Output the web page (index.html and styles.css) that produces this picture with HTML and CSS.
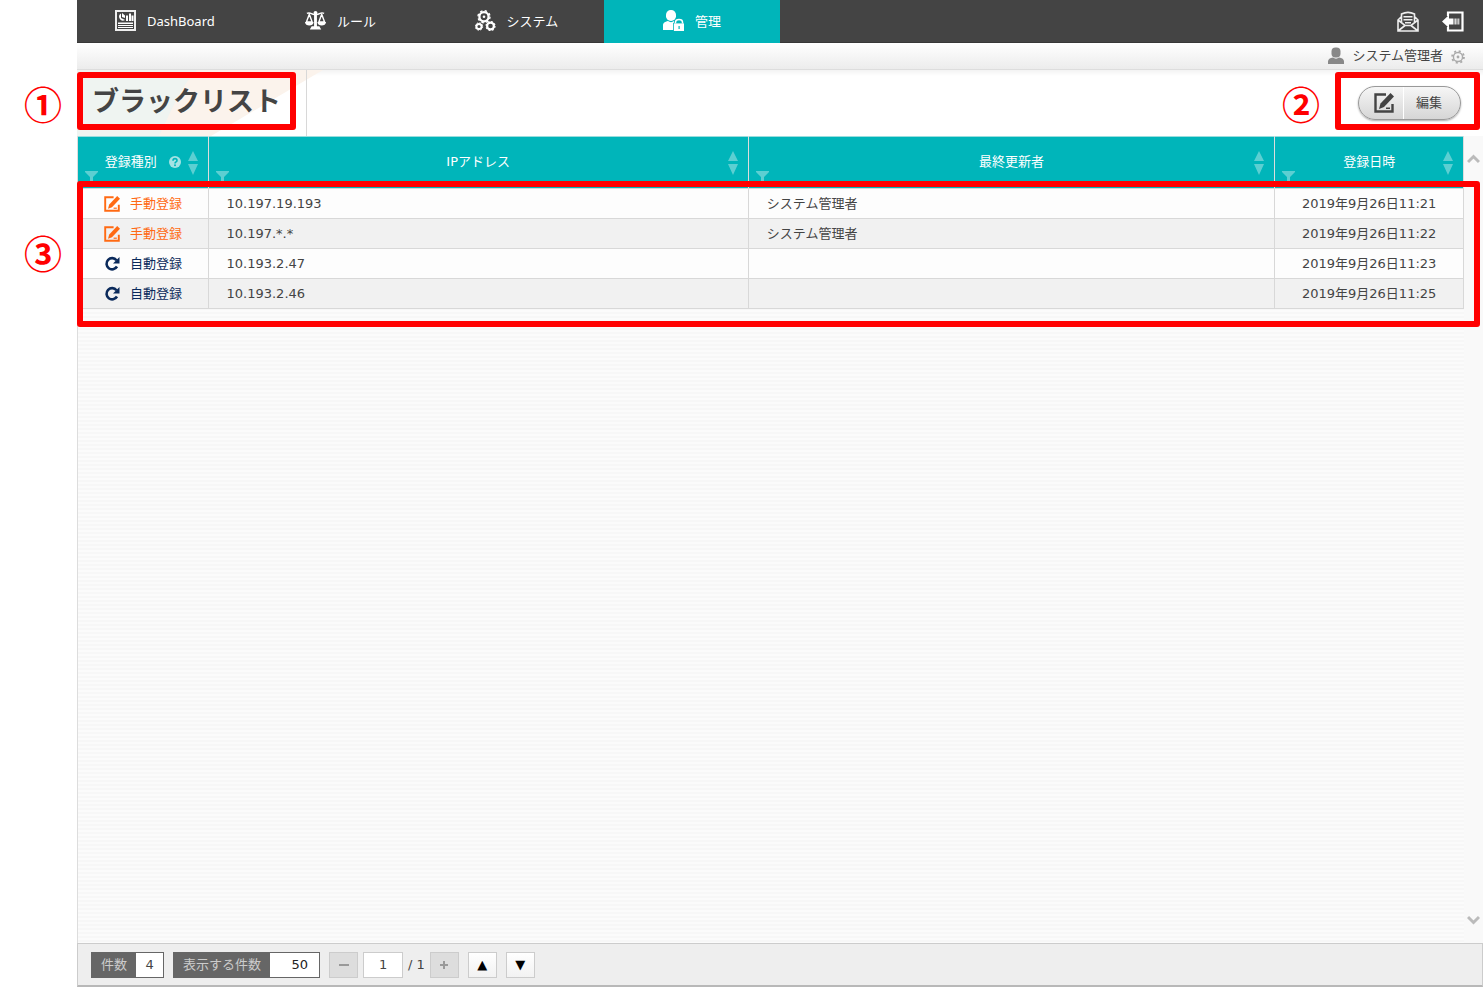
FILE: index.html
```html
<!DOCTYPE html>
<html lang="ja">
<head>
<meta charset="utf-8">
<meta name="viewport" content="width=device-width, initial-scale=1">
<title>ブラックリスト</title>
<link rel="stylesheet" href="styles.css">
</head>
<body>
<svg class="sprite" aria-hidden="true">
  <symbol id="filter" viewBox="0 0 13 13"><path fill="currentColor" d="M0 0h13v1L8 6v7H5V6L0 1z"/></symbol>
  <symbol id="sort" viewBox="0 0 10 24"><path fill="currentColor" d="M5 0l5 10H0zM0 13h10L5 24z"/></symbol>
  <symbol id="edit" viewBox="0 0 20 20"><path fill="none" stroke="currentColor" stroke-width="2.400" d="M12 1.500H1.500v17H18.500V11"/><path fill="currentColor" d="M16.500 0L20 3.500 10 14l-5 2 1.500-5.500z"/><path fill="currentColor" d="M12 14.500h4V16h-4z"/></symbol>
  <symbol id="redo" viewBox="0 0 16 16"><path fill="none" stroke="currentColor" stroke-width="2.600" d="M12.500 4.200A5.600 5.600 0 1 0 13 10.500"/><path fill="currentColor" d="M15.500 1v6.500H9z"/></symbol>
  <symbol id="person" viewBox="0 0 16 18"><rect x="3.500" y="0.500" width="9" height="10" rx="4" fill="currentColor"/><path fill="currentColor" d="M0 17v-2.500C0 12 2 11 5 10.500c1.500 1.500 4.500 1.500 6 0 3 .5 5 1.500 5 4V17z"/></symbol>
  <symbol id="gear" viewBox="0 0 20 20"><circle cx="10" cy="10" r="6.500" fill="none" stroke="currentColor" stroke-width="2"/><circle cx="10" cy="10" r="8.500" fill="none" stroke="currentColor" stroke-width="2.600" stroke-dasharray="3 3.676"/><circle cx="10" cy="10" r="2" fill="currentColor"/></symbol>
</svg>
<div class="page">
  <div class="app">
    <header class="topbar">
      <nav class="nav">
        <a class="nav-item" href="#dashboard">
          <svg class="nav-icon" viewBox="0 0 21 21"><rect x="1" y="1" width="19" height="19" fill="none" stroke="#eee" stroke-width="2"/><path fill="#fff" d="M6 3.500a3.800 3.800 0 1 0 4 6.500L6 8zM7 3v4l3 1V5.500zM11 5.500h2V11h-2zM14 3.500h2V11h-2zM16.500 5.500h2V11h-2zM3 12.500h15V14H3zM3 15h15v1H3zM3 17h15v1H3z"/></svg>
          <span>DashBoard</span>
        </a>
        <a class="nav-item" href="#rules">
          <svg class="nav-icon" viewBox="0 0 22 21"><path fill="none" stroke="#fff" stroke-width="1.500" d="M2 3c4-2 5 2 9 1 4 1 5-3 9-1M4.500 4L1.500 12h6zM17.500 4l-3 8h6z"/><circle cx="11" cy="2.500" r="2" fill="#fff"/><path fill="#fff" d="M9.500 4h3v13h-3zM0 12h9c0 5-9 5-9 0zM13 12h9c0 5-9 5-9 0zM7 16.500h8l2 3.500H5z"/></svg>
          <span>ルール</span>
        </a>
        <a class="nav-item" href="#system">
          <svg class="nav-icon" viewBox="0 0 21 21"><g fill="none" stroke="#fff"><circle cx="9" cy="6.700" r="4.600" stroke-width="2.300"/><circle cx="9" cy="6.700" r="6" stroke-width="1.400" stroke-dasharray="2.400 2.312"/><circle cx="4" cy="16.500" r="2.600" stroke-width="2"/><circle cx="4" cy="16.500" r="3.700" stroke-width="1" stroke-dasharray="1.500 1.406"/><circle cx="15.500" cy="16" r="3.400" stroke-width="2.200"/><circle cx="15.500" cy="16" r="4.500" stroke-width="1.200" stroke-dasharray="1.800 1.734"/></g><circle cx="9" cy="6.700" r="1.300" fill="#fff"/></svg>
          <span>システム</span>
        </a>
        <a class="nav-item nav-item-active" href="#admin" aria-current="page">
          <svg class="nav-icon" viewBox="0 0 21 21"><rect x="3" y="0" width="10" height="11" rx="4.800" fill="#fff"/><path fill="#fff" d="M0 20v-4.500C0 12.500 2 12 5 11c2 1.500 4 1.500 6 0v9z"/><path fill="#fff" stroke="#00b5ba" stroke-width=".8" d="M10.500 13h11v8.500h-11z"/><path fill="none" stroke="#fff" stroke-width="1.500" d="M12.500 13.500V12c0-3.500 7-3.500 7 0v1.500"/><path fill="#00b5ba" d="M15.500 16h1.200v3h-1.200z"/></svg>
          <span>管理</span>
        </a>
      </nav>
      <div class="top-actions">
        <button class="icon-button" type="button" aria-label="メール"><svg class="top-icon" viewBox="0 0 22 21"><g fill="none" stroke="#eee" stroke-width="1.600"><path d="M4 6L1 9v11h20V9l-3-3M1 9l7 5.500h6L21 9M1 20l7-5.500M21 20l-7-5.500M4.500 11V3c4-2 9-2 13 0v8"/></g><path fill="#eee" d="M6.500 5h9v1.500h-9zM6.500 8h9v1.500h-9zM8 11h6v1.500H8z"/></svg></button>
        <button class="icon-button" type="button" aria-label="ログアウト"><svg class="top-icon" viewBox="0 0 22 21"><path fill="none" stroke="#fff" stroke-width="2.200" d="M6 5V1.500h14.500v18H6V16"/><path fill="#fff" d="M7 4v3.500h4.500v6H7V17L0 10.500zM12.500 7.500h1.300v6h-1.300zM14.500 7.500h1v6h-1zM16.300 7.500h1v6h-1z"/></svg></button>
      </div>
    </header>
    <div class="userbar">
      <svg class="user-icon"><use href="#person"/></svg>
      <span>システム管理者</span>
      <button class="icon-button user-settings" type="button" aria-label="設定"><svg class="gear-icon"><use href="#gear"/></svg></button>
    </div>
    <main class="main">
      <div class="title-row">
        <svg class="title-art" viewBox="0 0 246 66" aria-hidden="true"><path fill="#fbf3ec" d="M0 0h246L134 66H0z"/><path fill="#eff4f1" d="M0 0h120C103 17 94 42 82 66H0z"/></svg>
        <h1 class="title">ブラックリスト</h1>
        <button class="edit-button" type="button"><svg class="edit-symbol"><use href="#edit"/></svg><span class="edit-label">編集</span></button>
        <div class="frame frame-title"><span class="mark">①</span></div>
        <div class="frame frame-edit"><span class="mark">②</span></div>
      </div>
      <div class="list">
        <div class="list-body">
          <table class="table">
            <colgroup><col class="col-type"><col class="col-ip"><col class="col-user"><col class="col-date"></colgroup>
            <thead>
              <tr>
                <th scope="col"><div class="head"><button class="icon-button head-filter" type="button" aria-label="登録種別で絞り込み"><svg class="filter-icon"><use href="#filter"/></svg></button><span class="head-text">登録種別<svg class="help-icon" viewBox="0 0 12 12"><circle cx="6" cy="6" r="6" fill="#a5e3e4"/><path fill="none" stroke="#00b5ba" stroke-width="1.600" d="M4 4.800c0-3 4-2.600 4-.4C8 6 6 5.800 6 7.500"/><circle cx="6" cy="9.300" r="1" fill="#00b5ba"/></svg></span><button class="icon-button head-sort" type="button" aria-label="登録種別で並べ替え"><svg class="sort-icon"><use href="#sort"/></svg></button></div></th>
                <th scope="col"><div class="head"><button class="icon-button head-filter" type="button" aria-label="IPアドレスで絞り込み"><svg class="filter-icon"><use href="#filter"/></svg></button><span class="head-text">IPアドレス</span><button class="icon-button head-sort" type="button" aria-label="IPアドレスで並べ替え"><svg class="sort-icon"><use href="#sort"/></svg></button></div></th>
                <th scope="col"><div class="head"><button class="icon-button head-filter" type="button" aria-label="最終更新者で絞り込み"><svg class="filter-icon"><use href="#filter"/></svg></button><span class="head-text">最終更新者</span><button class="icon-button head-sort" type="button" aria-label="最終更新者で並べ替え"><svg class="sort-icon"><use href="#sort"/></svg></button></div></th>
                <th scope="col"><div class="head"><button class="icon-button head-filter" type="button" aria-label="登録日時で絞り込み"><svg class="filter-icon"><use href="#filter"/></svg></button><span class="head-text">登録日時</span><button class="icon-button head-sort" type="button" aria-label="登録日時で並べ替え"><svg class="sort-icon"><use href="#sort"/></svg></button></div></th>
              </tr>
            </thead>
            <tbody>
              <tr><td><span class="type type-manual"><svg class="type-icon"><use href="#edit"/></svg>手動登録</span></td><td>10.197.19.193</td><td>システム管理者</td><td class="date">2019年9月26日11:21</td></tr>
              <tr><td><span class="type type-manual"><svg class="type-icon"><use href="#edit"/></svg>手動登録</span></td><td>10.197.*.*</td><td>システム管理者</td><td class="date">2019年9月26日11:22</td></tr>
              <tr><td><span class="type type-auto"><svg class="type-icon"><use href="#redo"/></svg>自動登録</span></td><td>10.193.2.47</td><td></td><td class="date">2019年9月26日11:23</td></tr>
              <tr><td><span class="type type-auto"><svg class="type-icon"><use href="#redo"/></svg>自動登録</span></td><td>10.193.2.46</td><td></td><td class="date">2019年9月26日11:25</td></tr>
            </tbody>
          </table>
        </div>
        <div class="scroller">
          <button class="icon-button" type="button" aria-label="上へスクロール"><svg class="chevron" viewBox="0 0 13 10"><path d="M1 8l5.500-5.500L12 8"/></svg></button>
          <button class="icon-button" type="button" aria-label="下へスクロール"><svg class="chevron" viewBox="0 0 13 10"><path d="M1 2l5.500 5.500L12 2"/></svg></button>
        </div>
        <div class="frame frame-rows"><span class="mark">③</span></div>
      </div>
    </main>
    <footer class="pager">
      <div class="count"><span class="count-label">件数</span><output class="count-value">4</output></div>
      <div class="count"><label class="count-label" for="page-size">表示する件数</label><input class="size-input" id="page-size" type="text" value="50"></div>
      <div class="pages">
        <button class="step" type="button" disabled aria-label="前のページ"><svg class="step-icon" viewBox="0 0 10 10"><path fill="#999" d="M0 4h10v2H0z"/></svg></button>
        <input class="page-input" type="text" value="1" aria-label="ページ">
        <span>/ 1</span>
        <button class="step" type="button" disabled aria-label="次のページ"><svg class="step-icon" viewBox="0 0 10 10"><path fill="#999" d="M1 4h3V1h2v3h3v2H6v3H4V6H1z"/></svg></button>
      </div>
      <button class="step step-move" type="button">▲</button>
      <button class="step step-move" type="button">▼</button>
    </footer>
  </div>
</div>
</body>
</html>
```
FILE: styles.css
```css
* { box-sizing: border-box; }
body {
  margin: 0;
  background: #fff;
  color: #444;
  font: 13px/20px "DejaVu Sans", "Noto Sans CJK JP", sans-serif;
}
button, input { font: inherit; color: inherit; }
svg { display: block; flex: none; }
.sprite { position: absolute; width: 0; height: 0; }
.icon-button { display: block; padding: 0; border: 0; background: none; color: inherit; cursor: pointer; }

.page { min-height: 100vh; display: flex; padding: 0 0 7px 77px; }
.app { flex: 1; min-width: 0; display: flex; flex-direction: column; }

.topbar { display: flex; justify-content: space-between; height: 43px; background: #444; border-bottom: 1px solid #383838; }
.nav { display: flex; flex: 1; margin-right: -86px; }
.nav-item {
  flex: 0 0 12.5%;
  height: 43px;
  padding-bottom: 2px;
  display: flex;
  align-items: center;
  justify-content: center;
  gap: 11px;
  color: #fff;
  font-family: "Noto Sans", "Noto Sans CJK JP", sans-serif;
  text-decoration: none;
  white-space: nowrap;
}
.nav-item-active { background: #00b5ba; }
.nav-icon { width: 21px; height: 21px; }
.top-actions { display: flex; align-items: center; gap: 23px; padding-right: 19px; }
.top-icon { width: 22px; height: 21px; }

.userbar {
  display: flex;
  align-items: center;
  justify-content: flex-end;
  gap: 8px;
  height: 27px;
  padding-right: 18px;
  background: linear-gradient(#fff, #ececec);
  border-bottom: 1px solid #ddd;
}
.user-icon { width: 16px; height: 18px; color: #888; }
.gear-icon { width: 14px; height: 14px; color: #aaa; }
.user-settings { padding-top: 2px; }

.main { flex: 1; display: flex; flex-direction: column; }
.title-row {
  position: relative;
  display: flex;
  align-items: center;
  justify-content: space-between;
  height: 66px;
  padding-right: 22px;
  background: linear-gradient(#f3f3f3, #fff 6px);
}
.title-art { position: absolute; top: 0; left: 0; width: 246px; height: 66px; }
.title {
  position: relative;
  width: 230px;
  height: 66px;
  margin: 0;
  padding-left: 15px;
  border-right: 1px solid #d8d8d8;
  font: bold 27px/60px "Noto Sans CJK JP", sans-serif;
  white-space: nowrap;
}
.edit-button {
  display: flex;
  align-items: center;
  height: 34px;
  padding: 0;
  border: 1px solid #999;
  border-radius: 17px;
  background: linear-gradient(#f6f6f6, #d6d6d6);
  box-shadow: 0 1px 2px #aaa;
  cursor: pointer;
}
.edit-symbol { width: 20px; height: 20px; margin: 0 9px 0 15px; }
.edit-label { padding: 0 18px 0 12px; border-left: 1px solid #fff; line-height: 32px; }

.frame { position: absolute; z-index: 2; border: 6px solid #f00; border-radius: 3px; pointer-events: none; }
.frame-title { top: 2px; left: 0; width: 219px; height: 58px; }
.frame-edit { top: 2px; right: 3px; width: 145px; height: 58px; }
.frame-rows { top: 45px; left: -1px; right: 3px; height: 146px; }
.mark {
  position: absolute;
  top: 6px;
  right: 100%;
  margin-right: 21px;
  color: #f00;
  font: bold 38px/38px "Noto Sans CJK JP", sans-serif;
}
.frame-rows .mark { top: 46px; }

.list { position: relative; flex: 1; display: flex; background: #f9f9f9; border-left: 1px solid #ddd; }
.list-body { flex: 1; min-width: 0; background: repeating-linear-gradient(#f7f7f7 0 2px, #fbfbfb 2px 4px); }
.table { width: 100%; border-collapse: collapse; table-layout: fixed; }
.col-type { width: 130px; }
.col-ip { width: 39%; }
.col-user { width: 38%; }
.table th { height: 52px; padding: 0; background: #00b5ba; color: #fff; font-weight: normal; border-right: 1px solid #ddd; border-top: 1px solid #9dd; }
.head { display: grid; grid-template-columns: 20px 1fr 20px; align-items: center; height: 50px; }
.head-text { display: flex; align-items: center; justify-content: center; gap: 12px; padding-bottom: 2px; white-space: nowrap; }
.head-filter { align-self: end; padding: 0 0 4px 7px; color: #5ccfd2; }
.head-sort { color: #5ccfd2; }
.filter-icon { width: 13px; height: 13px; }
.sort-icon { width: 10px; height: 24px; }
.help-icon { width: 12px; height: 12px; }
.table td { height: 30px; padding: 0 18px; border: 1px solid #d8d8d8; border-left: 0; background: #fdfdfd; white-space: nowrap; }
.table tr:nth-child(even) td { background: #f1f1f1; }
.table td:first-child { padding: 0 0 0 26px; }
.table .date { text-align: center; }
.type { display: flex; align-items: center; gap: 10px; }
.type-icon { width: 16px; height: 16px; }
.type-manual { color: #ff6a13; }
.type-auto { color: #0b2a5b; }
.scroller { width: 19px; display: flex; flex-direction: column; align-items: center; justify-content: space-between; padding: 18px 0; }
.chevron { width: 13px; height: 10px; fill: none; stroke: #bbb; stroke-width: 3; }

.pager {
  display: flex;
  align-items: center;
  gap: 9px;
  height: 44px;
  padding-left: 13px;
  background: #eee;
  border: 1px solid #ccc;
  border-bottom: 2px solid #b8b8b8;
}
.count { display: flex; height: 26px; border: 1px solid #666; background: #fff; line-height: 24px; }
.count-label { padding: 0 9px; background: #666; color: #ccc; }
.count-value { width: 27px; text-align: center; }
.size-input { width: 49px; padding: 0 11px; border: 0; background: #fff; text-align: right; color: #222; }
.pages { display: flex; align-items: center; gap: 5px; }
.page-input { width: 40px; height: 26px; padding: 0; border: 1px solid #ccc; background: #fff; text-align: center; }
.step { display: flex; align-items: center; justify-content: center; width: 29px; height: 26px; padding: 0; border: 1px solid #ccc; background: #ddd; }
.step-icon { width: 10px; height: 10px; }
.step-move { background: linear-gradient(#fff, #f2f2f2); color: #000; }
```
